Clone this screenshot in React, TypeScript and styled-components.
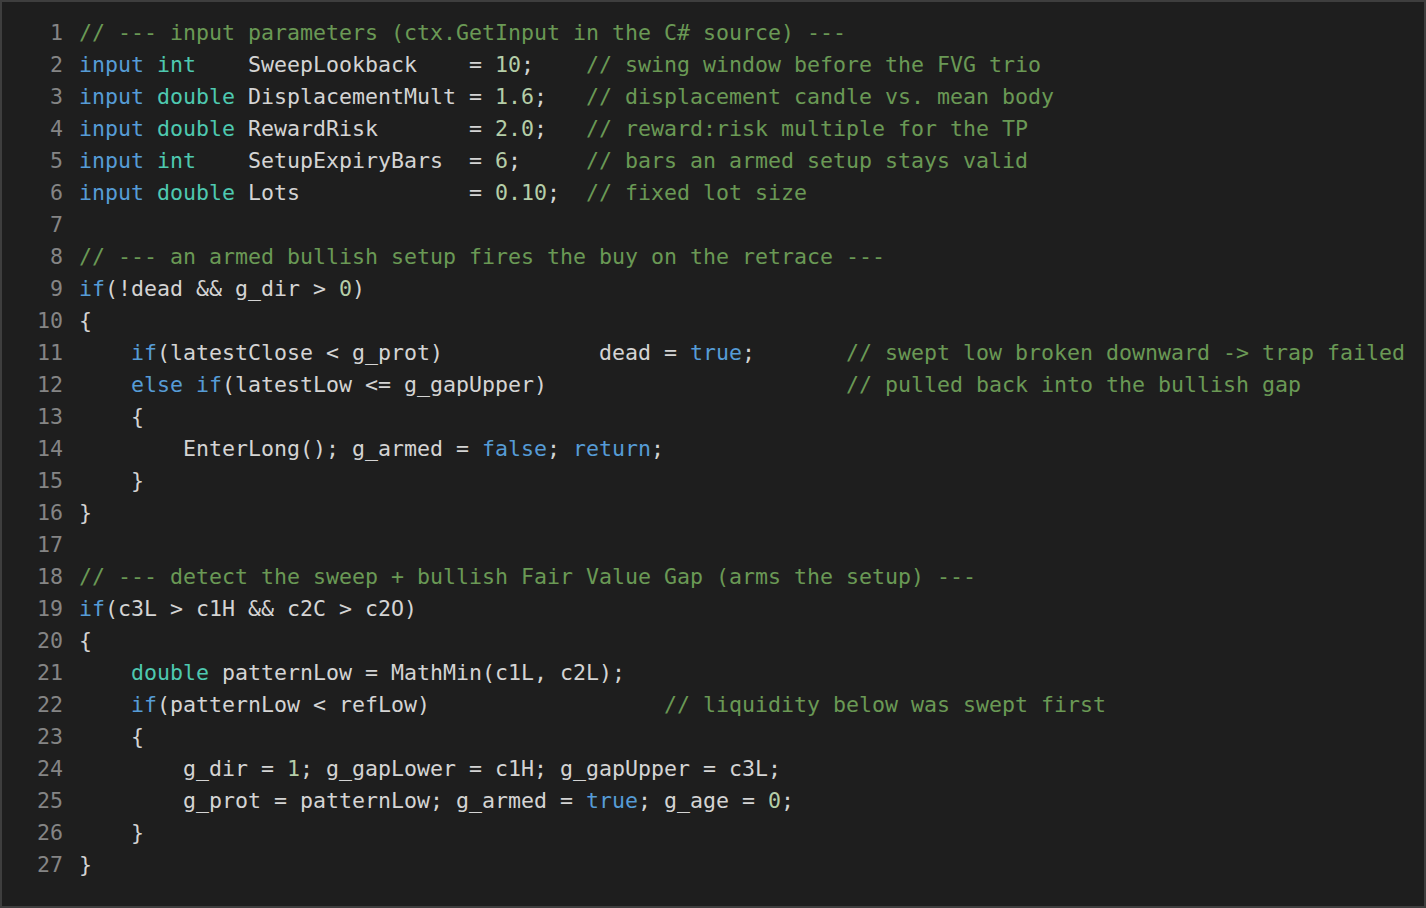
import React from "react";
import styled, { createGlobalStyle } from "styled-components";

const Global = createGlobalStyle`
  html, body { margin: 0; padding: 0; background: #1e1e1e; }
  * { box-sizing: border-box; }
`;

const Frame = styled.div`
  width: 1426px;
  height: 908px;
  background: #1e1e1e;
  border: 2px solid #3e3e3e;
  padding: 15px 0 0 35px;
  font-family: "DejaVu Sans Mono", "Liberation Mono", monospace;
  font-size: 21.6px;
  overflow: hidden;
`;

const Line = styled.div`
  display: flex;
  gap: 16px;
  height: 32px;
  line-height: 32px;
`;

const LineNo = styled.span`
  width: 26px;
  text-align: right;
  color: #858585;
  flex: none;
`;

const Code = styled.span`
  white-space: pre;
  color: #d4d4d4;
`;

type Kind = "kw" | "type" | "num" | "com" | "txt";

const Tok = styled.span<{ $kind: Kind }>`
  color: ${(p) =>
    p.$kind === "kw"
      ? "#569cd6"
      : p.$kind === "type"
      ? "#4ec9b0"
      : p.$kind === "num"
      ? "#b5cea8"
      : p.$kind === "com"
      ? "#6a9955"
      : "#d4d4d4"};
`;

const KW = new Set(["input", "if", "else", "true", "false", "return"]);
const TYPES = new Set(["int", "double"]);

function tokenize(src: string): { t: string; k: Kind }[] {
  const out: { t: string; k: Kind }[] = [];
  let i = 0;
  let buf = "";
  const flush = () => {
    if (buf) out.push({ t: buf, k: "txt" });
    buf = "";
  };
  while (i < src.length) {
    const rest = src.slice(i);
    if (rest.startsWith("//")) {
      flush();
      out.push({ t: rest, k: "com" });
      break;
    }
    const id = /^[A-Za-z_][A-Za-z0-9_]*/.exec(rest);
    if (id) {
      const w = id[0];
      if (KW.has(w)) {
        flush();
        out.push({ t: w, k: "kw" });
      } else if (TYPES.has(w)) {
        flush();
        out.push({ t: w, k: "type" });
      } else buf += w;
      i += w.length;
      continue;
    }
    const num = /^[0-9]+(\.[0-9]+)?/.exec(rest);
    if (num) {
      flush();
      out.push({ t: num[0], k: "num" });
      i += num[0].length;
      continue;
    }
    buf += src[i];
    i++;
  }
  flush();
  return out;
}

const LINES = [
  "// --- input parameters (ctx.GetInput in the C# source) ---",
  "input int    SweepLookback    = 10;    // swing window before the FVG trio",
  "input double DisplacementMult = 1.6;   // displacement candle vs. mean body",
  "input double RewardRisk       = 2.0;   // reward:risk multiple for the TP",
  "input int    SetupExpiryBars  = 6;     // bars an armed setup stays valid",
  "input double Lots             = 0.10;  // fixed lot size",
  "",
  "// --- an armed bullish setup fires the buy on the retrace ---",
  "if(!dead && g_dir > 0)",
  "{",
  "    if(latestClose < g_prot)            dead = true;       // swept low broken downward -> trap failed",
  "    else if(latestLow <= g_gapUpper)                       // pulled back into the bullish gap",
  "    {",
  "        EnterLong(); g_armed = false; return;",
  "    }",
  "}",
  "",
  "// --- detect the sweep + bullish Fair Value Gap (arms the setup) ---",
  "if(c3L > c1H && c2C > c2O)",
  "{",
  "    double patternLow = MathMin(c1L, c2L);",
  "    if(patternLow < refLow)                  // liquidity below was swept first",
  "    {",
  "        g_dir = 1; g_gapLower = c1H; g_gapUpper = c3L;",
  "        g_prot = patternLow; g_armed = true; g_age = 0;",
  "    }",
  "}",
];

export default function App() {
  return (
    <>
      <Global />
      <Frame>
        {LINES.map((l, idx) => (
          <Line key={idx}>
            <LineNo>{idx + 1}</LineNo>
            <Code>
              {tokenize(l).map((tk, j) => (
                <Tok key={j} $kind={tk.k}>
                  {tk.t}
                </Tok>
              ))}
            </Code>
          </Line>
        ))}
      </Frame>
    </>
  );
}
